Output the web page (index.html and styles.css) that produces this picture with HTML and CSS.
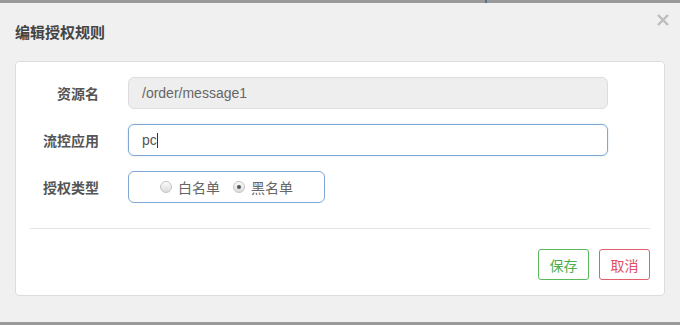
FILE: index.html
```html
<!DOCTYPE html>
<html lang="zh-CN">
<head>
    <meta charset="UTF-8">
    <title>编辑授权规则</title>
    <link rel="stylesheet" href="styles.css">
</head>
<body>
    <div class="topbar"><span class="mark"></span></div>
    <div class="dialog">
        <div class="dialog-header">
            <h3>编辑授权规则</h3>
            <svg class="close" width="12" height="12" viewBox="0 0 12 12">
                <path d="M1 1 L11 11 M11 1 L1 11" stroke="#bdbdbd" stroke-width="2.4" fill="none"/>
            </svg>
        </div>
        <div class="panel">
            <form class="rule-form">
                <div class="row">
                    <label>资源名</label>
                    <input type="text" class="field disabled" value="/order/message1" disabled>
                </div>
                <div class="row">
                    <label>流控应用</label>
                    <div class="field active">pc<span class="caret"></span></div>
                </div>
                <div class="row">
                    <label>授权类型</label>
                    <div class="radio-box">
                        <span class="radio"><i class="dot"></i>白名单</span>
                        <span class="radio"><i class="dot checked"></i>黑名单</span>
                    </div>
                </div>
            </form>
            <div class="divider"></div>
            <div class="actions">
                <button class="btn save">保存</button>
                <button class="btn cancel">取消</button>
            </div>
        </div>
    </div>
</body>
</html>
```

FILE: styles.css
```css
body {
    margin: 0;
    font-family: "Liberation Sans", Arial, "Noto Sans CJK SC", sans-serif;
    background-color: #9a9a9a;
    height: 325px;
    overflow: hidden;
}

.topbar {
    height: 3px;
    position: relative;
}

.topbar .mark {
    position: absolute;
    left: 485px;
    top: 0;
    width: 2px;
    height: 3px;
    background-color: #5a6f88;
}

.dialog {
    height: 319px;
    background-color: #f0f0f0;
    box-sizing: border-box;
    padding: 0 15px;
}

.dialog-header {
    display: flex;
    justify-content: space-between;
    align-items: flex-start;
    height: 58px;
}

.dialog-header h3 {
    margin: 18px 0 0;
    font-size: 15px;
    font-weight: bold;
    color: #444;
}

.close {
    margin: 11px -4px 0 0;
}

.panel {
    background-color: #fff;
    border: 1px solid #ddd;
    border-radius: 4px;
    height: 235px;
    box-sizing: border-box;
    padding: 15px 14px 0 14px;
}

.rule-form {
    display: flex;
    flex-direction: column;
    gap: 15px;
}

.row {
    display: flex;
    align-items: center;
}

.row label {
    width: 69px;
    text-align: right;
    margin-right: 29px;
    font-size: 14px;
    font-weight: bold;
    color: #555;
}

.field {
    width: 480px;
    height: 32px;
    box-sizing: border-box;
    border-radius: 6px;
    padding: 0 13px;
    font-family: inherit;
    font-size: 14px;
    display: flex;
    align-items: center;
}

.field.disabled {
    background-color: #eee;
    border: 1px solid #ddd;
    color: #666;
}

.field.active {
    border: 1px solid #7ea7d3;
    color: #555;
    box-shadow: 0 0 2px rgba(102, 175, 233, 0.4);
}

.caret {
    display: inline-block;
    width: 1px;
    height: 15px;
    background-color: #333;
}

.radio-box {
    width: 197px;
    height: 32px;
    box-sizing: border-box;
    border: 1px solid #7ea7d3;
    border-radius: 6px;
    display: flex;
    align-items: center;
    justify-content: center;
    gap: 13px;
    font-size: 14px;
    color: #666;
}

.radio {
    display: flex;
    align-items: center;
    gap: 6px;
}

.dot {
    width: 12px;
    height: 12px;
    border-radius: 50%;
    border: 1px solid #c4c4c4;
    background: linear-gradient(#fafafa, #dcdcdc);
    box-sizing: border-box;
    position: relative;
}

.dot.checked::after {
    content: "";
    position: absolute;
    left: 3px;
    top: 3px;
    width: 4px;
    height: 4px;
    border-radius: 50%;
    background-color: #555;
}

.divider {
    height: 1px;
    background-color: #e5e5e5;
    margin-top: 25px;
}

.actions {
    display: flex;
    justify-content: flex-end;
    gap: 10px;
    margin-top: 20px;
}

.btn {
    width: 51px;
    height: 31px;
    background-color: #fff;
    border-radius: 3px;
    font-family: inherit;
    font-size: 14px;
    padding: 0;
}

.btn.save {
    border: 1px solid #5cb85c;
    color: #4cae4c;
}

.btn.cancel {
    border: 1px solid #e06070;
    color: #e05060;
}
```
